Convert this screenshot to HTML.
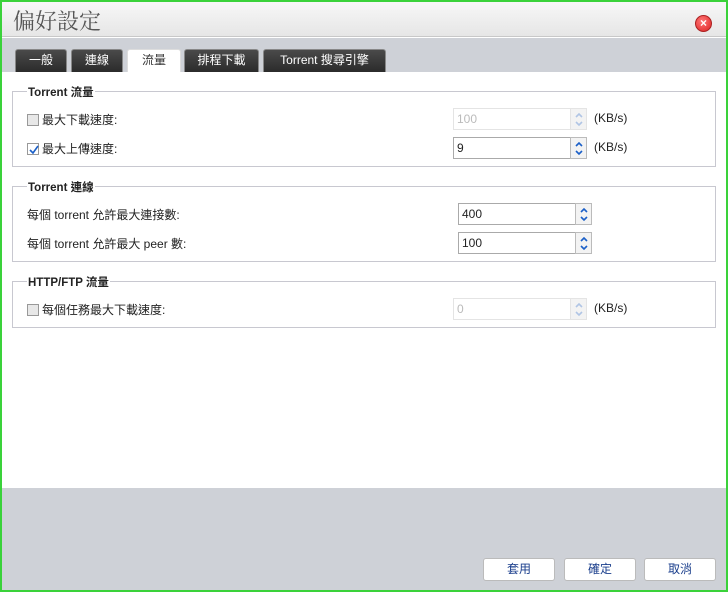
<!DOCTYPE html>
<html><head><meta charset="utf-8"><style>
*{box-sizing:border-box;margin:0;padding:0}
body{width:728px;height:592px;overflow:hidden;font-family:"Liberation Sans","Noto Sans CJK TC",sans-serif;font-size:12px;color:#222;position:relative;background:#fff}
.frame{position:absolute;left:0;top:0;width:728px;height:592px;border:2px solid #3ad23a;}
.title{position:absolute;left:2px;top:2px;width:724px;height:35px;background:linear-gradient(#f7f7f7,#e6e6e6);border-bottom:1px solid #c8c8c8}
.title span{position:absolute;left:11px;top:3px;font-size:22px;color:#555;font-family:"Noto Serif CJK SC","Liberation Serif",serif}
.close{position:absolute;left:693px;top:13px;width:17px;height:17px;border-radius:50%;background:radial-gradient(circle at 40% 35%,#f77,#d22);border:1px solid #a22;color:#fff;font-size:12px;line-height:15px;text-align:center;font-weight:bold}
.tabbar{position:absolute;left:2px;top:38px;width:724px;height:34px;background:#ced1d7}
.tab{position:absolute;top:11px;height:23px;background:linear-gradient(#4a4a4a,#2b2b2b);color:#fff;text-align:center;line-height:21px;border-radius:3px 3px 0 0;font-size:12px;border:1px solid #888;border-bottom:none}
.tab.act{background:#fff;color:#333;border-color:#ddd;height:24px}
.content{position:absolute;left:2px;top:72px;width:724px;height:416px;background:#fff}
.fs{position:absolute;left:12px;width:704px;border:1px solid #c8c8d0}
.lg{position:absolute;left:14px;top:-8px;background:#fff;padding:0 1px;font-weight:bold;font-size:11.5px;color:#222}
.row{position:absolute;font-size:12px}
.cb{display:inline-block;width:12px;height:12px;border:1px solid #999;background:#e8e8e8;vertical-align:-2px;margin-right:3px;position:relative}
.cb svg{position:absolute;left:0;top:0}
.inp{position:absolute;width:134px;height:22px;border:1px solid #aaa;background:#fff;padding-left:3px;line-height:20px;font-size:12px}
.inp.dis{border-color:#e4e4e4;color:#bbb}
.sp{position:absolute;right:-1px;top:-1px;width:17px;height:22px;border:1px solid #bbb;background:#f3f3f3}
.sp svg{position:absolute;left:3px;top:3px}
.dis .sp{border-color:#e4e4e4}
.dis .sp svg{opacity:.3}
.unit{position:absolute;font-size:12px}
.bottom{position:absolute;left:2px;top:488px;width:724px;height:102px;background:#ced1d7}
.btn{position:absolute;top:558px;height:23px;width:72px;background:#fff;border:1px solid #bbb;border-radius:3px;text-align:center;line-height:21px;color:#1a3e8c;font-size:12px}
</style></head><body>
<div class="title"><span>偏好設定</span><div class="close">×</div></div>
<div class="tabbar">
<div class="tab" style="left:13px;width:52px">一般</div>
<div class="tab" style="left:69px;width:52px">連線</div>
<div class="tab act" style="left:125px;width:54px">流量</div>
<div class="tab" style="left:182px;width:75px">排程下載</div>
<div class="tab" style="left:261px;width:123px">Torrent 搜尋引擎</div>
</div>
<div class="content"></div>
<div class="fs" style="top:91px;height:76px"><div class="lg">Torrent 流量</div></div>
<div class="row" style="left:27px;top:111px"><span class="cb"></span>最大下載速度:</div>
<div class="inp dis" style="left:453px;top:108px">100<div class="sp"><svg width="10" height="15"><path d="M2 5L5 2L8 5M2 10L5 13L8 10" stroke="#1a5fc8" stroke-width="1.6" fill="none"/></svg></div></div>
<div class="unit" style="left:594px;top:111px">(KB/s)</div>
<div class="row" style="left:27px;top:140px"><span class="cb" style="background:#fff"><svg width="12" height="12"><path d="M2 6L5 9L10 2" stroke="#1a5fc8" stroke-width="1.6" fill="none"/></svg></span>最大上傳速度:</div>
<div class="inp" style="left:453px;top:137px">9<div class="sp"><svg width="10" height="15"><path d="M2 5L5 2L8 5M2 10L5 13L8 10" stroke="#1a5fc8" stroke-width="1.6" fill="none"/></svg></div></div>
<div class="unit" style="left:594px;top:140px">(KB/s)</div>
<div class="fs" style="top:186px;height:76px"><div class="lg">Torrent 連線</div></div>
<div class="row" style="left:27px;top:206px">每個 torrent 允許最大連接數:</div>
<div class="inp" style="left:458px;top:203px">400<div class="sp"><svg width="10" height="15"><path d="M2 5L5 2L8 5M2 10L5 13L8 10" stroke="#1a5fc8" stroke-width="1.6" fill="none"/></svg></div></div>
<div class="row" style="left:27px;top:235px">每個 torrent 允許最大 peer 數:</div>
<div class="inp" style="left:458px;top:232px">100<div class="sp"><svg width="10" height="15"><path d="M2 5L5 2L8 5M2 10L5 13L8 10" stroke="#1a5fc8" stroke-width="1.6" fill="none"/></svg></div></div>
<div class="fs" style="top:281px;height:47px"><div class="lg">HTTP/FTP 流量</div></div>
<div class="row" style="left:27px;top:301px"><span class="cb"></span>每個任務最大下載速度:</div>
<div class="inp dis" style="left:453px;top:298px">0<div class="sp"><svg width="10" height="15"><path d="M2 5L5 2L8 5M2 10L5 13L8 10" stroke="#1a5fc8" stroke-width="1.6" fill="none"/></svg></div></div>
<div class="unit" style="left:594px;top:301px">(KB/s)</div>
<div class="bottom"></div>
<div class="btn" style="left:483px">套用</div>
<div class="btn" style="left:564px">確定</div>
<div class="btn" style="left:644px">取消</div>
<div class="frame"></div>
</body></html>
